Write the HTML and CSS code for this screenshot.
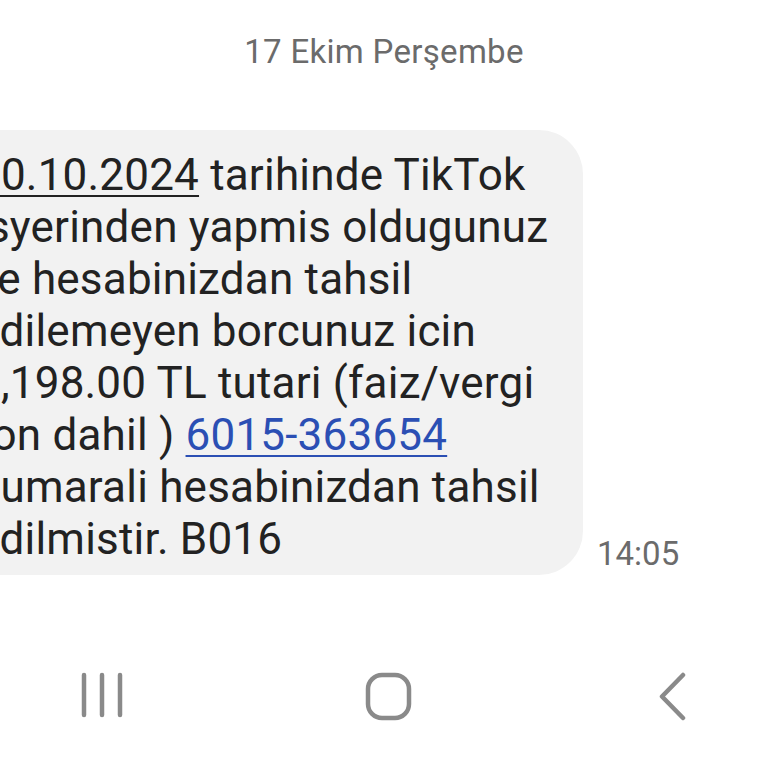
FILE: index.html
```html
<!DOCTYPE html>
<html lang="tr">
<head>
  <meta charset="UTF-8" />
  <meta name="viewport" content="width=device-width, initial-scale=1.0"/>
  <title>Mesajlar</title>
  <link rel="stylesheet" href="styles.css">
</head>
<body>
  <div class="screen">
    <!-- Date divider -->
    <div class="date-divider">17 Ekim Perşembe</div>

    <!-- Incoming message -->
    <div class="message-row">
      <div class="bubble">
        <p class="message-text"><span class="date-link">10.10.2024</span> tarihinde TikTok<br>isyerinden yapmis oldugunuz<br>ve hesabinizdan tahsil<br>edilemeyen borcunuz icin<br>1,198.00 TL tutari (faiz/vergi<br>fon dahil ) <a class="number-link" href="#">6015-363654</a><br>numarali hesabinizdan tahsil<br>edilmistir. B016</p>
      </div>
      <div class="message-time">14:05</div>
    </div>
  </div>

  <!-- Navigation bar -->
  <nav class="nav-bar">
    <svg class="nav-icon" width="50" height="50" viewBox="0 0 50 50">
      <line x1="7" y1="3" x2="7" y2="43" />
      <line x1="25" y1="3" x2="25" y2="43" />
      <line x1="43" y1="3" x2="43" y2="43" />
    </svg>
    <svg class="nav-icon" width="50" height="50" viewBox="0 0 50 50">
      <rect x="4" y="3" width="41" height="43" rx="14" />
    </svg>
    <svg class="nav-icon" width="50" height="50" viewBox="0 0 50 50">
      <polyline points="33,3 12,24.5 33,46" />
    </svg>
  </nav>
</body>
</html>
```

FILE: styles.css
```css
* {
  margin: 0;
  padding: 0;
  box-sizing: border-box;
}

body {
  background-color: #fff;
  font-family: Roboto, 'Noto Sans', sans-serif;
  color: #222;
  width: 768px;
  height: 768px;
  overflow: hidden;
}

.screen {
  height: 650px;
}

/* Date divider */
.date-divider {
  text-align: center;
  font-size: 33px;
  color: #6b6b6b;
  padding-top: 32px;
  line-height: 40px;
  letter-spacing: 0.3px;
}

/* Message */
.message-row {
  display: flex;
  align-items: flex-end;
  margin-top: 58px;
}

.bubble {
  background-color: #f2f2f2;
  border-radius: 44px;
  margin-left: -80px;
  width: 663px;
  padding: 19px 20px 10px 56px;
}

.message-text {
  font-size: 44px;
  line-height: 52px;
  letter-spacing: 0.2px;
  color: #222;
  white-space: nowrap;
}

.date-link {
  text-decoration: underline;
  text-decoration-thickness: 2px;
  text-underline-offset: 5px;
}

.number-link {
  color: #2b4fb4;
  text-decoration: underline;
  text-decoration-thickness: 2px;
  text-underline-offset: 5px;
}

.message-time {
  font-size: 33px;
  color: #6b6b6b;
  margin-left: 14px;
  padding-bottom: 2px;
}

/* Navigation bar */
.nav-bar {
  display: flex;
  justify-content: space-between;
  padding: 22px 68px 0 77px;
}

.nav-icon {
  fill: none;
  stroke: #8a8a8a;
  stroke-width: 4.5;
  stroke-linecap: round;
  stroke-linejoin: round;
}
```
